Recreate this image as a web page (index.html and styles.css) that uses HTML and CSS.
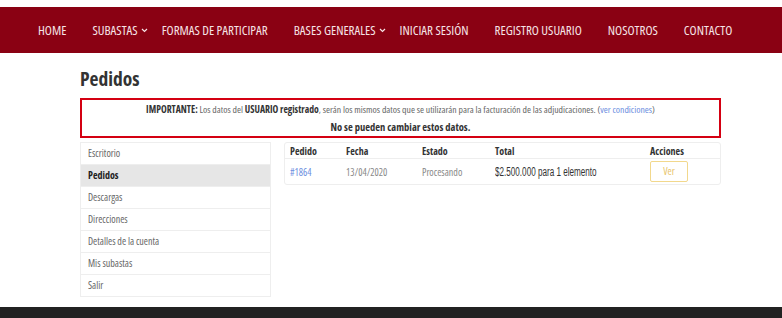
FILE: index.html
```html
<!DOCTYPE html>
<html lang="es">

<head>
    <meta charset="utf-8" name="viewport" content="width=device-width, initial-scale=1" />
    <title>Pedidos</title>
    <link rel="stylesheet" href="styles.css">
</head>

<body>
    <nav class="menu">
        <ul>
            <li><a href="#">HOME</a></li>
            <li class="drop"><a href="#">SUBASTAS</a><svg class="chev" width="7" height="5" viewBox="0 0 7 5"><polyline points="1,1 3.5,3.5 6,1" /></svg></li>
            <li><a href="#">FORMAS DE PARTICIPAR</a></li>
            <li class="drop"><a href="#">BASES GENERALES</a><svg class="chev" width="7" height="5" viewBox="0 0 7 5"><polyline points="1,1 3.5,3.5 6,1" /></svg></li>
            <li><a href="#">INICIAR SESIÓN</a></li>
            <li><a href="#">REGISTRO USUARIO</a></li>
            <li><a href="#">NOSOTROS</a></li>
            <li><a href="#">CONTACTO</a></li>
        </ul>
    </nav>

    <main class="wrap">
        <h1>Pedidos</h1>

        <div class="aviso">
            <p><b>IMPORTANTE:</b> Los datos del <b>USUARIO registrado</b>, serán los mismos datos que se utilizarán para la facturación de las adjudicaciones. (<a href="#">ver condiciones</a>)</p>
            <p class="fuerte">No se pueden cambiar estos datos.</p>
        </div>

        <div class="cuenta">
            <ul class="lateral">
                <li><a href="#">Escritorio</a></li>
                <li class="activo"><a href="#">Pedidos</a></li>
                <li><a href="#">Descargas</a></li>
                <li><a href="#">Direcciones</a></li>
                <li><a href="#">Detalles de la cuenta</a></li>
                <li><a href="#">Mis subastas</a></li>
                <li><a href="#">Salir</a></li>
            </ul>

            <div class="contenido">
                <table class="pedidos">
                    <thead>
                        <tr>
                            <th class="c-num">Pedido</th>
                            <th class="c-fecha">Fecha</th>
                            <th class="c-estado">Estado</th>
                            <th class="c-total">Total</th>
                            <th class="c-acc">Acciones</th>
                        </tr>
                    </thead>
                    <tbody>
                        <tr>
                            <td><a href="#">#1864</a></td>
                            <td class="gris">13/04/2020</td>
                            <td class="gris">Procesando</td>
                            <td class="monto"><span>$2.500.000 para 1 elemento</span></td>
                            <td><a class="ver" href="#">Ver</a></td>
                        </tr>
                    </tbody>
                </table>
            </div>
        </div>
    </main>

    <footer class="pie"></footer>
</body>

</html>
```

FILE: styles.css
```css
body {
    margin: 0;
    padding-top: 7px;
    font-family: "Open Sans", "Liberation Sans", sans-serif;
    font-stretch: 75%;
    color: #555;
    background: #fff;
}

a {
    text-decoration: none;
    color: inherit;
}

.menu {
    background: #8a0113;
    height: 46px;
}

.menu ul {
    list-style: none;
    margin: 0;
    padding: 0 0 0 38px;
    display: flex;
    align-items: center;
    gap: 26px;
    height: 100%;
}

.menu li {
    display: flex;
    align-items: center;
    font-size: 13px;
    color: #f6e4e6;
}

.menu .drop {
    margin-right: -12px;
}

.chev {
    margin-left: 3px;
    margin-top: 1px;
    fill: none;
    stroke: #f6e4e6;
    stroke-width: 1.2;
}

.wrap {
    margin-left: 80px;
    width: 641px;
}

h1 {
    margin: 15px 0 0;
    height: 30px;
    font-size: 19.5px;
    font-weight: 700;
    color: #333;
    line-height: 22px;
}

.aviso {
    border: 2px solid #d40012;
    text-align: center;
    padding: 1px 0 0;
    font-size: 9.7px;
    color: #666;
}

.aviso p {
    margin: 0;
    line-height: 17px;
}

.aviso b {
    color: #333;
}

.aviso a {
    color: #6c8ee0;
}

.aviso .fuerte {
    font-weight: 700;
    color: #333;
    font-size: 10.5px;
    line-height: 18px;
}

.cuenta {
    display: flex;
    align-items: flex-start;
    gap: 13px;
    margin-top: 4px;
}

.lateral {
    list-style: none;
    margin: 0;
    padding: 0;
    width: 189px;
    border: 1px solid #eee;
}

.lateral li {
    height: 21px;
    line-height: 21px;
    padding-left: 7px;
    font-size: 10px;
    color: #666;
    border-top: 1px solid #eee;
}

.lateral li:first-child {
    border-top: none;
}

.lateral .activo {
    background: #e6e6e6;
    font-weight: 700;
    color: #222;
}

.contenido {
    flex: 1;
}

.pedidos {
    width: 100%;
    table-layout: fixed;
    border: 1px solid #eee;
    border-radius: 3px;
    border-collapse: separate;
    border-spacing: 0;
    font-size: 10px;
}

.pedidos th {
    box-sizing: border-box;
    text-align: left;
    font-weight: 700;
    color: #333;
    height: 16px;
    padding: 0 0 0 5px;
    border-bottom: 1px solid #eee;
}

.pedidos td {
    height: 25px;
    padding: 0 0 0 5px;
    color: #6c8ee0;
}

.c-num { width: 56px; }
.c-fecha { width: 76px; }
.c-estado { width: 73px; }
.c-total { width: 155px; }
.c-acc { width: 75px; }

.pedidos td.gris {
    color: #888;
}

.pedidos td.monto {
    font-family: "Liberation Sans", sans-serif;
    font-stretch: normal;
    font-size: 12.5px;
    color: #333;
    white-space: nowrap;
}

.monto span {
    display: inline-block;
    transform: scaleX(0.65);
    transform-origin: left center;
}

.ver {
    display: inline-block;
    width: 36px;
    height: 19px;
    line-height: 19px;
    text-align: center;
    border: 1px solid #f2d88c;
    border-radius: 2px;
    color: #e8c46a;
}

.pie {
    background: #222;
    height: 12px;
    margin-top: 10px;
}
```
